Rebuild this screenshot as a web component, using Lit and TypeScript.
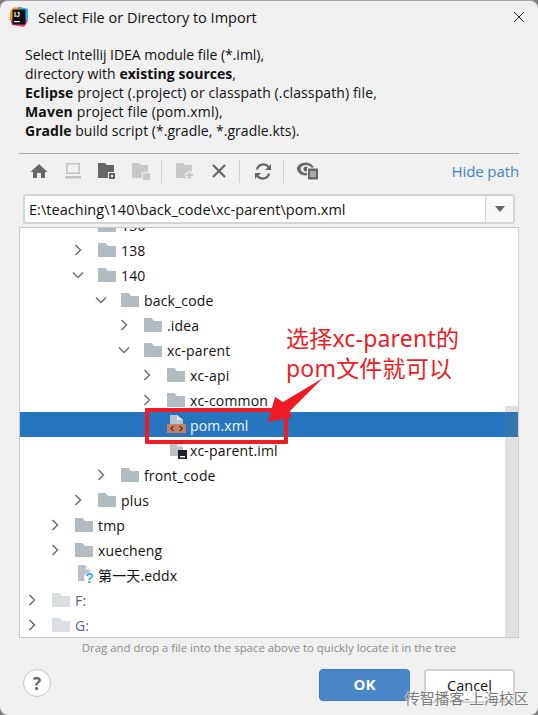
import { LitElement, html, css } from "lit";
import { customElement } from "lit/decorators.js";

const folder = (fill = "#b0bbc2", lock = false) => html`<svg class="ico" width="20" height="18" viewBox="0 0 20 18">
  <path d="M0 2H7.5L10 5H18V16H0Z" fill="${fill}"/>
  ${lock ? html`<path d="M13 17V11.5a2.5 2.5 0 0 1 5 0V13h1v5H12v-5h1" fill="#c9cfd3"/>` : ""}
</svg>`;

const pom = html`<svg class="ico" width="20" height="18" viewBox="0 0 20 18" style="overflow:visible">
  <path d="M3 -1H10L16 4V8H3Z" fill="#b7c2cc"/><path d="M10 -1V4H16Z" fill="#dfe6ec"/>
  <rect x="0" y="8" width="19" height="9" fill="#cb7d62"/>
  <path d="M6.5 10L3.8 12.5L6.500 15M12.5 10L15.2 12.5L12.5 15" fill="none" stroke="#4a3a36" stroke-width="1.2"/>
</svg>`;

const iml = html`<svg class="ico" width="20" height="18" viewBox="0 0 20 18" style="overflow:visible">
  <path d="M3 0H10L16 6V15H3Z" fill="#b8c1c7"/><path d="M10 0V6H16Z" fill="#e2e6e9"/>
  <rect x="11" y="9" width="9" height="9" fill="#222"/><rect x="13" y="15" width="5" height="1.4" fill="#fff"/>
</svg>`;

const eddx = html`<svg class="ico" width="20" height="18" viewBox="0 0 20 18" style="overflow:visible">
  <path d="M3 -1H10L15 4V15H3Z" fill="#b8c1c7"/><path d="M10.5 -1V4H15.5Z" fill="#e2e6e9"/>
  <circle cx="14.5" cy="12" r="5.5" fill="#fff"/>
  <text x="14.5" y="17" text-anchor="middle" font-family="Liberation Sans" font-weight="700" font-size="14" fill="#3fa9dc">?</text>
</svg>`;

const chevR = html`<svg class="chev" width="12" height="12" viewBox="0 0 12 12"><path d="M3.5 1L8.5 6L3.5 11" fill="none" stroke="#6e6e6e" stroke-width="1.5"/></svg>`;
const chevD = html`<svg class="chev" width="12" height="12" viewBox="0 0 12 12"><path d="M1 3.5L6 8.5L11 3.5" fill="none" stroke="#6e6e6e" stroke-width="1.5"/></svg>`;

type Row = { d: number; t: string; c?: "r" | "d"; i: any; sel?: boolean; dim?: boolean };
const F = folder();
const L = folder("#d9dee1", true);
const rows: Row[] = [
  { d: 2, t: "136", c: "d", i: F },
  { d: 2, t: "138", c: "r", i: F },
  { d: 2, t: "140", c: "d", i: F },
  { d: 3, t: "back_code", c: "d", i: F },
  { d: 4, t: ".idea", c: "r", i: F },
  { d: 4, t: "xc-parent", c: "d", i: F },
  { d: 5, t: "xc-api", c: "r", i: F },
  { d: 5, t: "xc-common", c: "r", i: F },
  { d: 5, t: "pom.xml", i: pom, sel: true },
  { d: 5, t: "xc-parent.iml", i: iml },
  { d: 3, t: "front_code", c: "r", i: F },
  { d: 2, t: "plus", c: "r", i: F },
  { d: 1, t: "tmp", c: "r", i: F },
  { d: 1, t: "xuecheng", c: "r", i: F },
  { d: 1, t: "第一天.eddx", i: eddx },
  { d: 0, t: "F:", c: "r", i: L, dim: true },
  { d: 0, t: "G:", c: "r", i: L, dim: true },
];

@customElement("app-root")
export class AppRoot extends LitElement {
  static styles = css`
    :host { display: block; width: 538px; height: 715px; background: #7f7f7f; overflow: hidden; }
    * { box-sizing: border-box; }
    .dialog { position: relative; width: 538px; height: 715px; background: #f0f0f0; border-radius: 8px; border-top: 1px solid #a8a8a8;
      font-family: "Open Sans", "Noto Sans CJK SC", sans-serif; color: #111; overflow: hidden; display: flex; flex-direction: column; }
    .title { height: 44px; display: flex; align-items: center; padding: 0 0 12px 10px; flex: none; position: relative; font-size: 14.5px; }
    .title svg.logo { margin-right: 10px; flex: none; }
    .close { margin-left: auto; margin-right: 13px; margin-top: -1px; display: block; }
    .desc { padding: 0 0 0 25px; font-size: 14px; line-height: 19px; height: 108px; flex: none; }
    .desc b { font-weight: 700; }
    .l1 { letter-spacing: -.02px; }
    .l2 { letter-spacing: .04px; }
    .l3 { letter-spacing: .12px; }
    .l4 { letter-spacing: .17px; }
    .l5 { letter-spacing: .03px; }
    .sep { margin: 0 19px; height: 1px; background: #ababab; flex: none; }
    .toolbar { height: 40px; flex: none; display: flex; align-items: center; padding: 0 19px 6px 22px; }
    .tool { width: 34px; height: 22px; display: flex; align-items: center; justify-content: center; flex: none; }
    .vsep { width: 1px; height: 23px; background: #cfcfcf; margin: 0 6px 0 3px; flex: none; }
    .hide { margin-left: auto; color: #3f86c6; font-size: 15px; letter-spacing: -.1px; }
    .combo { margin: 0 23px; height: 30px; flex: none; background: #fff; border: 2px solid #d4d4d4; border-radius: 3px; display: flex; align-items: center; font-size: 14.5px; }
    .combo .path { padding-left: 4px; flex: 1; letter-spacing: .03px; }
    .combo .arrow { width: 28px; height: 100%; background: #f8f8f8; border-left: 1px solid #d4d4d4; display: flex; align-items: center; justify-content: center; }
    .tree { position: relative; margin: 3px 19px 0; height: 411px; flex: none; background: #fff; border: 1px solid #c9c9c9; border-right-color: #d0d0d0; overflow: hidden; }
    .inner { margin-top: -16px; }
    .row { height: 25px; display: flex; align-items: center; font-size: 14px; letter-spacing: .15px; color: #111; padding-top: 1px; }
    .row.sel { background: #2675bf; color: #f0f6fb; }
    .row.dim { color: #5f5f9c; }
    .slot { width: 32px; flex: none; display: flex; padding-left: 6px; }
    .ico { flex: none; margin-right: 3px; margin-top: -1px; overflow: visible; }
    .scroll { position: absolute; right: 0; top: 178px; bottom: 0; width: 13px; background: rgba(120,120,120,.22); }
    .hint { text-align: center; font-size: 11.4px; color: #8c8c8c; height: 20px; line-height: 17px; flex: none; margin-top: 1px; }
    .footer { flex: none; display: flex; align-items: flex-start; padding: 10px 23px 0 23px; }
    .help { width: 28px; height: 28px; border-radius: 50%; background: #fff; border: 1px solid #c4c4c4; display: flex; align-items: center; justify-content: center; font: 700 17px "Open Sans", sans-serif; color: #666; }
    .ok, .cancel { height: 32px; border-radius: 4px; display: flex; align-items: center; justify-content: center; font-size: 14.5px; padding-bottom: 2px; }
    .ok { margin-left: auto; width: 91px; background: #4a87c9; border: 1px solid #3f7ab8; color: #fff; font-weight: 700; font-size: 15px; }
    .cancel { margin-left: 14px; width: 91px; height: 34px; background: #fff; border: 2px solid #d2d2d2; color: #111; }
    .rect { position: absolute; left: 145px; top: 407px; width: 143px; height: 36px; border: 4px solid #ee1c25; border-radius: 1px; }
    .arrowmark { position: absolute; left: 260px; top: 368px; }
    .note { position: absolute; left: 286px; top: 322px; color: #ee1c25; font: 23px/30px "Noto Sans", "Noto Sans CJK SC", sans-serif; white-space: nowrap; letter-spacing: .2px; }
    .mark { position: absolute; left: 405px; top: 687px; font: 14.8px/20px "Noto Sans CJK SC", sans-serif; color: #7a7a7a; white-space: nowrap; text-shadow: 0 0 2px #fff, 0 0 2px #fff; }
  `;

  render() {
    return html`<div class="dialog">
      <div class="title">
        <svg class="logo" width="18" height="20" viewBox="0 0 18 20">
          <path d="M1 3L9 0L18 2V14L14 20L2 18L0 12Z" fill="#f0467c"/>
          <path d="M9 0L18 2V14L13 10Z" fill="#1fb5ee"/>
          <path d="M0 5L4 0L10 2L4 12L0 12Z" fill="#f9a11b"/>
          <rect x="2.5" y="2.5" width="13" height="15" fill="#111"/>
          <text x="4" y="9.5" font-family="Liberation Sans" font-size="7" font-weight="700" fill="#fff">IJ</text>
          <rect x="4" y="14" width="6" height="1.2" fill="#fff"/>
        </svg>
        Select File or Directory to Import
        <svg class="close" width="12" height="12" viewBox="0 0 12 12"><path d="M1 1L11 11M11 1L1 11" stroke="#222" stroke-width="1"/></svg>
      </div>
      <div class="desc">
        <div class="l1">Select Intellij IDEA module file (*.iml),</div>
        <div class="l2">directory with <b>existing sources</b>,</div>
        <div class="l3"><b>Eclipse</b> project (.project) or classpath (.classpath) file,</div>
        <div class="l4"><b>Maven</b> project file (pom.xml),</div>
        <div class="l5"><b>Gradle</b> build script (*.gradle, *.gradle.kts).</div>
      </div>
      <div class="sep"></div>
      <div class="toolbar">
        <div class="tool"><svg width="18" height="16" viewBox="0 0 18 16"><path d="M9 1L17.5 9H15V15H11V10H7V15H3V9H.5Z" fill="#666"/></svg></div>
        <div class="tool"><svg width="18" height="16" viewBox="0 0 18 16"><path d="M2 0H16V11H2ZM3.500 1.500V9.500H14.500V1.500Z" fill="#c4c4c4" fill-rule="evenodd"/><rect x="1" y="13" width="16" height="2.500" fill="#c4c4c4"/></svg></div>
        <div class="tool"><svg width="18" height="18" viewBox="0 0 18 18"><path d="M0 1H7L9 3H16V16H0Z" fill="#666"/><rect x="10" y="10" width="8" height="8" fill="#f0f0f0"/><rect x="11" y="11" width="6" height="6" fill="#666"/><rect x="13" y="13" width="2" height="2" fill="#f0f0f0"/></svg></div>
        <div class="tool"><svg width="18" height="18" viewBox="0 0 18 18"><path d="M0 1H7L9 3H16V16H0Z" fill="#c8c8c8"/><rect x="10" y="10" width="8" height="8" fill="#f0f0f0"/><rect x="11" y="11" width="7" height="7" fill="#c8c8c8"/></svg></div>
        <div class="vsep"></div>
        <div class="tool"><svg width="18" height="18" viewBox="0 0 18 18"><path d="M0 1H7L9 3H16V16H0Z" fill="#c8c8c8"/><path d="M9 13H18M13.500 9V18" stroke="#f0f0f0" stroke-width="4"/><path d="M10 13H17M13.500 10V17" stroke="#c8c8c8" stroke-width="2"/></svg></div>
        <div class="tool"><svg width="14" height="14" viewBox="0 0 14 14"><path d="M1 1L13 13M13 1L1 13" stroke="#666" stroke-width="2.200"/></svg></div>
        <div class="vsep"></div>
        <div class="tool"><svg width="18" height="17" viewBox="0 0 18 17"><path d="M3 6.500A6.500 6.500 0 0 1 14.500 4M15 10.500A6.500 6.500 0 0 1 3.500 13" fill="none" stroke="#666" stroke-width="2.200"/><path d="M17 1V7H11Z M1 16V10H7Z" fill="#666"/></svg></div>
        <div class="vsep"></div>
        <div class="tool"><svg width="21" height="18" viewBox="0 0 21 18"><ellipse cx="8.500" cy="7" rx="8.500" ry="6.500" fill="#666"/><ellipse cx="9" cy="7" rx="5.500" ry="4" fill="#f0f0f0"/><circle cx="9" cy="7" r="2.500" fill="#666"/><rect x="10" y="5.500" width="11" height="12.500" fill="#f0f0f0"/><rect x="11" y="6.500" width="10" height="11" fill="#666"/><path d="M13 10H19M13 12H19M13 14H19" stroke="#f0f0f0"/></svg></div>
        <div class="hide">Hide path</div>
      </div>
      <div class="combo">
        <div class="path">E:\\teaching\\140\\back_code\\xc-parent\\pom.xml</div>
        <div class="arrow"><svg width="10" height="6" viewBox="0 0 10 6"><path d="M0 0H10L5 6Z" fill="#666"/></svg></div>
      </div>
      <div class="tree">
        <div class="inner">
          ${rows.map(
            (r) => html`<div class="row ${r.sel ? "sel" : ""} ${r.dim ? "dim" : ""}" style="padding-left:${r.d * 23}px">
              <span class="slot">${r.c === "r" ? chevR : r.c === "d" ? chevD : ""}</span>
              ${r.i}<span>${r.t}</span>
            </div>`
          )}
        </div>
        <div class="scroll"></div>
      </div>
      <div class="hint">Drag and drop a file into the space above to quickly locate it in the tree</div>
      <div class="footer">
        <div class="help">?</div>
        <div class="ok">OK</div>
        <div class="cancel">Cancel</div>
      </div>
      <div class="rect"></div>
      <svg class="arrowmark" width="70" height="60" viewBox="260 369 70 60"><path d="M268 422L275 397L283 402L323 378L290 411L292 417Z" fill="#ee1c25"/></svg>
      <div class="note">选择xc-parent的<br>pom文件就可以</div>
      <div class="mark">传智播客-上海校区</div>
    </div>`;
  }
}
